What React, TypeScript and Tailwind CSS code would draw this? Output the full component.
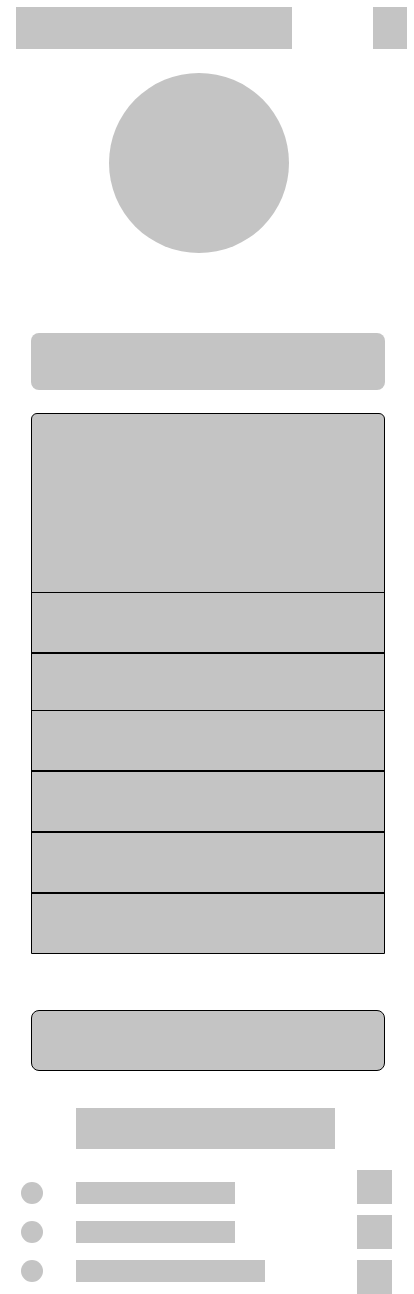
export default function App() {
  const listRows = [
    { border: "border-t", h: "h-[60px]" },
    { border: "border-t-2", h: "h-[58px]" },
    { border: "border-t", h: "h-[60px]" },
    { border: "border-t-2", h: "h-[61px]" },
    { border: "border-t-2", h: "h-[61px]" },
    { border: "border-t-2", h: "h-[61px]" },
  ]
  const items = [{ w: "w-[159px]" }, { w: "w-[159px]" }, { w: "w-[189px]" }]

  return (
    <div className="w-[414px] h-[1294px] bg-white overflow-hidden font-['Liberation_Sans',sans-serif]">
      {/* header */}
      <div className="flex justify-between items-start pt-[7px] pl-4 pr-[7px]">
        <div className="w-[276px] h-[42px] bg-[#c4c4c4]" />
        <div className="w-[34px] h-[42px] bg-[#c4c4c4]" />
      </div>

      {/* avatar */}
      <div className="mt-[24px] ml-[109px] w-[180px] h-[180px] rounded-full bg-[#c4c4c4]" />

      {/* primary button */}
      <div className="mt-[80px] ml-[31px] w-[354px] h-[57px] rounded-[8px] bg-[#c4c4c4]" />

      {/* list card */}
      <div className="mt-[23px] ml-[31px] w-[354px] border border-black rounded-t-[6px] bg-[#c4c4c4] overflow-hidden">
        <div className="h-[178px]" />
        {listRows.map((r, i) => (
          <div key={i} className={`${r.border} border-black ${r.h}`} />
        ))}
      </div>

      {/* secondary button */}
      <div className="mt-[56px] ml-[31px] w-[354px] h-[61px] border border-black rounded-[8px] bg-[#c4c4c4]" />

      {/* section title */}
      <div className="mt-[37px] ml-[76px] w-[259px] h-[41px] bg-[#c4c4c4]" />

      {/* items */}
      <div className="mt-[21px] flex">
        <div className="pt-[12px] pl-[21px] flex flex-col gap-[17px]">
          {items.map((it, i) => (
            <div key={i} className="flex items-center">
              <div className="w-[22px] h-[22px] rounded-full bg-[#c4c4c4]" />
              <div className={`ml-[33px] ${it.w} h-[22px] bg-[#c4c4c4]`} />
            </div>
          ))}
        </div>
        <div className="ml-auto mr-[22px] flex flex-col gap-[11px]">
          {items.map((_, i) => (
            <div key={i} className="w-[35px] h-[34px] bg-[#c4c4c4]" />
          ))}
        </div>
      </div>
    </div>
  )
}
